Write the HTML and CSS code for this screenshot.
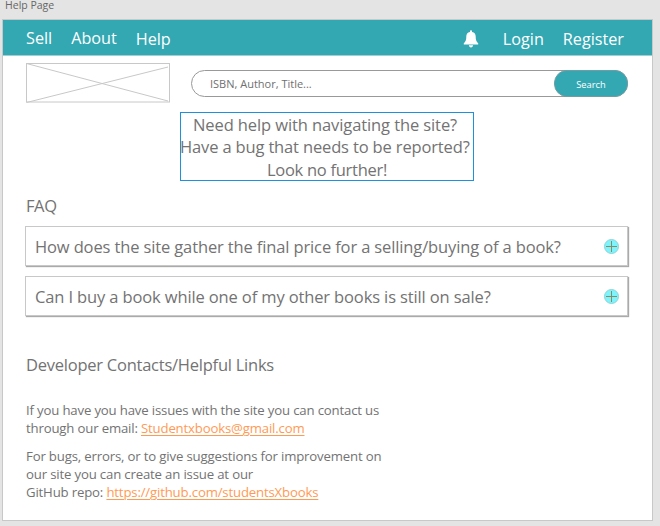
FILE: index.html
```
<!DOCTYPE html>
<html lang="en">
<head>
<meta charset="utf-8">
<title>Help Page</title>
<link rel="stylesheet" href="styles.css">
</head>
<body>
<div class="artboard-label">Help Page</div>
<div class="page">
  <header class="navbar">
    <nav class="nav-left">
      <a class="nav-sell">Sell</a>
      <a class="nav-about">About</a>
      <a class="nav-help">Help</a>
    </nav>
    <nav class="nav-right">
      <svg class="bell" viewBox="0 0 16 18" width="16" height="18"><path d="M8 .2C8.7.2 9 .7 9 1.3V2c2.600.5 3.700 2.300 3.700 4.600 0 3.500.6 5.100 2.500 6.600v1.200H.8v-1.200c1.900-1.500 2.500-3.100 2.500-6.600C3.300 4.300 4.400 2.500 7 2v-.7C7 .7 7.300.2 8 .2zM5.900 15.300h4.200c-.1 1.200-.9 2.100-2.100 2.100s-2-.9-2.100-2.100z"/></svg>
      <a class="nav-login">Login</a>
      <a class="nav-register">Register</a>
    </nav>
  </header>
  <div class="search-row">
    <svg class="logo" viewBox="0 0 144 40" width="144" height="40"><rect x=".5" y=".5" width="143" height="38.500"/><path d="M.5.500 142 38M.5 39.500 142 4"/></svg>
    <div class="search">
      <span class="placeholder">ISBN, Author, Title...</span>
      <button class="search-button">Search</button>
    </div>
  </div>
  <div class="intro">
    <div class="line-need">Need help with navigating the site?</div>
    <div class="line-have">Have a bug that needs to be reported?</div>
    <div class="line-look">Look no further!</div>
  </div>
  <h2 class="faq-title">FAQ</h2>
  <div class="faq">
    <div class="question">
      <span>How does the site gather the final price for a selling/buying of a book?</span>
      <svg class="plus" viewBox="0 0 15 15" width="15" height="15"><circle cx="7.500" cy="7.500" r="7"/><path d="M2 7.500h11M7.500 2v11"/></svg>
    </div>
    <div class="question">
      <span>Can I buy a book while one of my other books is still on sale?</span>
      <svg class="plus" viewBox="0 0 15 15" width="15" height="15"><circle cx="7.500" cy="7.500" r="7"/><path d="M2 7.500h11M7.500 2v11"/></svg>
    </div>
  </div>
  <h2 class="contact-title">Developer Contacts/Helpful Links</h2>
  <div class="contact">
    <p>If you have you have issues with the site you can contact us<br>through our email: <a>Studentxbooks@gmail.com</a></p>
    <p>For bugs, errors, or to give suggestions for improvement on<br>our site you can create an issue at our<br>GitHub repo: <a>https://github.com/studentsXbooks</a></p>
  </div>
</div>
</body>
</html>
```
FILE: styles.css
```
* { box-sizing: border-box; }

body {
  margin: 0;
  height: 526px;
  overflow: hidden;
  background: #e4e4e4;
  color: #737373;
  font: 400 16.500px/22px "Open Sans", "Noto Sans", sans-serif;
  white-space: nowrap;
}

.artboard-label {
  height: 19px;
  padding-left: 5px;
  font-size: 10.500px;
  line-height: 10px;
  color: #666;
}

.page {
  width: 651px;
  height: 502px;
  margin-left: 2px;
  border: 1px solid #c8c8c8;
  background: #fff;
}

.navbar {
  display: flex;
  justify-content: space-between;
  height: 36px;
  padding: 7px 28px 0 23px;
  border-bottom: 1px solid #a5cdd1;
  background: #33a8b3;
  color: #fff;
  font-size: 16.200px;
}

.nav-left, .nav-right { display: flex; align-items: flex-start; }
.nav-about { margin-left: 19px; }
.nav-help { margin: 1px 0 0 19px; }
.bell { margin: 3px 24px 0 0; fill: #fff; }
.nav-login { margin: 1px 19px 0 0; }
.nav-register { margin-top: 1px; }

.search-row {
  display: flex;
  gap: 21px;
  height: 49px;
  padding: 7px 0 0 23px;
}

.logo { fill: none; stroke: #c8c8c8; }

.search {
  display: flex;
  justify-content: space-between;
  align-items: center;
  width: 437px;
  height: 27px;
  margin-top: 7px;
  padding-left: 18px;
  border: 1px solid #999;
  border-radius: 14px;
}

.placeholder {
  font-size: 11px;
  color: #707070;
}

.search-button {
  width: 74px;
  height: 27px;
  margin: -1px;
  padding: 2px 0 0;
  border: 1px solid #6e9da2;
  border-radius: 13px;
  background: #33a8b3;
  color: #fff;
  font: 400 9.300px/14px "Open Sans", sans-serif;
}

.intro {
  width: 294px;
  height: 69px;
  margin: 7px 0 0 177px;
  border: 1px solid #1e90dc;
}

.line-need { height: 23px; padding: 1px 0 0 12px; letter-spacing: -.1px; }
.line-have { height: 22px; margin-left: -1px; letter-spacing: -.15px; }
.line-look { padding: 1px 0 0 86px; letter-spacing: -.28px; }

h2 {
  margin: 0 0 0 23px;
  font-size: 16.500px;
  font-weight: 400;
}

.faq-title {
  margin-top: 14px;
  letter-spacing: -.4px;
}

.faq {
  display: grid;
  gap: 10px;
  width: 603px;
  margin: 9px 0 0 22px;
}

.question {
  display: flex;
  justify-content: space-between;
  align-items: flex-start;
  height: 40px;
  padding: 9px 8px 0 9px;
  border: 1px solid #c8c8c8;
  box-shadow: 1px 1px 1px #aaa;
  letter-spacing: -.13px;
}

.plus { margin-top: 3px; fill: #7df3fb; stroke: #8fd3d8; stroke-width: 1; }
.plus path { stroke: #8b8a63; }

.contact-title {
  margin-top: 38px;
  letter-spacing: -.24px;
}

.contact {
  margin: 25px 0 0 23px;
  font-size: 13.200px;
  line-height: 18px;
  letter-spacing: -.17px;
}

.contact p { margin: 0 0 10px; }

.contact a {
  color: #ff9a55;
  text-decoration: underline;
  text-decoration-thickness: 1px;
  text-underline-offset: 2px;
}
```
